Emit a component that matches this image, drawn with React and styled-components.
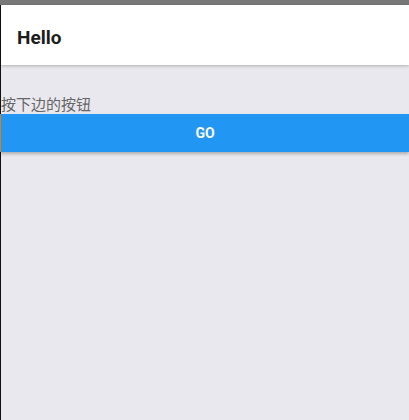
import styled, {createGlobalStyle} from "styled-components"

const GlobalStyle = createGlobalStyle`
  html, body {
    margin: 0;
    padding: 0;
    height: 100%;
    background: #e9e8ee;
  }
  #root {
    height: 100%;
  }
`

const App = () => {
  return (
    <Page>
      <GlobalStyle/>
      <StatusBar/>
      <Screen>
        <Header>
          <Title>Hello</Title>
        </Header>
        <Content>
          <Hint>按下边的按钮</Hint>
          <GoButton>GO</GoButton>
        </Content>
      </Screen>
    </Page>
  )
}

export default App

const Page = styled.div`
  display: flex;
  flex-direction: column;
  height: 420px;
  width: 409px;
  background: #e9e8ee;
  overflow: hidden;
`

const StatusBar = styled.div`
  height: 5px;
  flex-shrink: 0;
  background: #787878;
`

const Screen = styled.div`
  flex: 1;
  display: flex;
  flex-direction: column;
  border-left: 1px solid #111;
`

const Header = styled.header`
  display: flex;
  align-items: center;
  height: 60px;
  box-sizing: border-box;
  padding: 4px 0 0 16px;
  background: #fff;
  box-shadow: 0 1px 3px rgba(0, 0, 0, 0.25);
  position: relative;
  z-index: 1;
`

const Title = styled.h1`
  margin: 0;
  font-family: Roboto, "Noto Sans", sans-serif;
  font-size: 19px;
  font-weight: 700;
  color: #1c1c1c;
`

const Content = styled.main`
  display: flex;
  flex-direction: column;
  padding-top: 31px;
`

const Hint = styled.p`
  margin: 0;
  font-family: Roboto, "Noto Sans CJK SC", sans-serif;
  font-size: 15px;
  line-height: 18px;
  color: #666;
`

const GoButton = styled.button`
  height: 38px;
  margin-left: -1px;
  border: none;
  border-left: 1px solid #e07b16;
  background: #2196f3;
  color: #fff;
  font-family: Roboto, "Noto Sans", sans-serif;
  font-size: 14px;
  font-weight: 700;
  box-shadow: 0 2px 3px rgba(0, 0, 0, 0.25);
  cursor: pointer;
`
